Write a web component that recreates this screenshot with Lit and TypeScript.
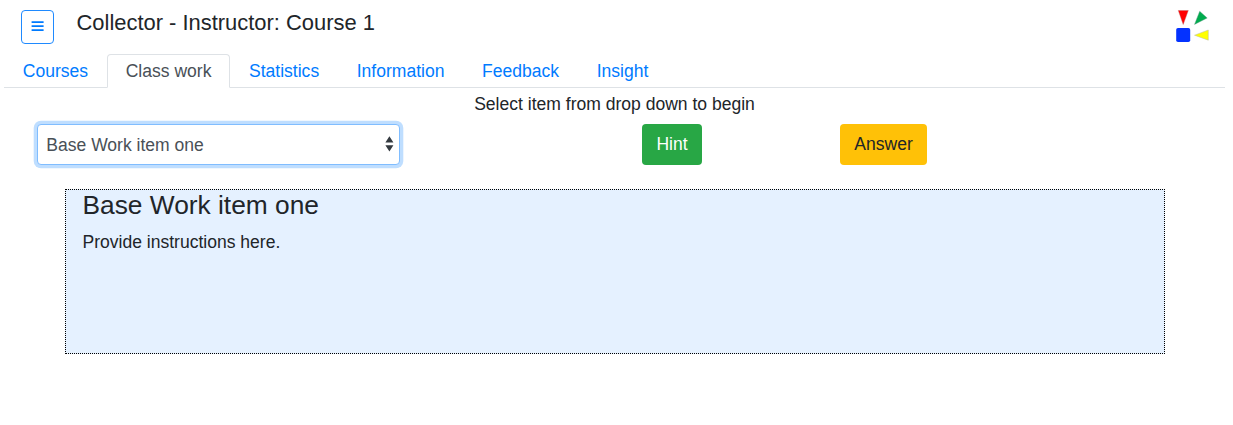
import { LitElement, html, css } from "lit";
import { customElement, state } from "lit/decorators.js";
import { classMap } from "lit/directives/class-map.js";

@customElement("app-root")
export class AppRoot extends LitElement {
  static styles = css`
    :host {
      display: block;
      height: 425px;
      box-sizing: border-box;
      padding: 0 8px 0 4px;
      overflow: hidden;
      background: #fff;
      color: #212529;
      font: 17.55px/26px "Liberation Sans", Arial, sans-serif;
    }
    * {
      box-sizing: border-box;
    }
    button {
      font: inherit;
      cursor: pointer;
      margin: 0;
    }
    header {
      display: flex;
      align-items: flex-start;
      height: 54px;
      padding: 10px 15px 0 17px;
    }
    .menu {
      display: flex;
      align-items: center;
      justify-content: center;
      width: 33px;
      height: 34px;
      padding: 0;
      border: 1px solid #1f8aff;
      border-radius: 4px;
      background: #fff;
      color: #007bff;
    }
    .menu svg,
    .logo {
      display: block;
    }
    h1 {
      flex: 1;
      margin: 0 0 0 22.5px;
      font-size: 21.93px;
      line-height: 26px;
      font-weight: 400;
    }
    nav {
      display: flex;
      height: 34px;
      border-bottom: 1px solid #dee2e6;
    }
    .tab {
      height: 34px;
      padding: 0 17.8px;
      border: 1px solid transparent;
      border-radius: 4px 4px 0 0;
      background: none;
      color: #007bff;
      line-height: 32px;
      white-space: nowrap;
    }
    .tab.active {
      color: #495057;
      background: #fff;
      border-color: #dee2e6 #dee2e6 #fff;
    }
    .prompt {
      margin: 3px 0 7px;
      text-align: center;
    }
    .controls {
      display: flex;
      height: 41px;
      padding-left: 33px;
    }
    .select {
      display: flex;
      align-items: center;
      justify-content: space-between;
      width: 363px;
      padding: 0 5.5px 0 8.3px;
      border: 1px solid #80bdff;
      border-radius: 4px;
      box-shadow: 0 0 0 3.3px #bfdeff;
      background: #fff;
      color: #495057;
    }
    .btn {
      padding: 0;
      border: 0;
      border-radius: 4px;
      line-height: 41px;
    }
    .hint {
      width: 60px;
      margin-left: 242px;
      background: #28a745;
      color: #fff;
    }
    .answer {
      width: 87px;
      margin-left: 138px;
      background: #ffc107;
      color: #212529;
    }
    .work {
      width: 1100px;
      height: 165px;
      margin: 24px 0 0 61px;
      padding: 0 16.5px;
      border: 1px dotted #000;
      background: #e5f1ff;
    }
    h2 {
      margin: 0 0 8px;
      font-size: 26.32px;
      line-height: 31px;
      font-weight: 400;
    }
    p {
      margin: 0;
    }
  `;

  private tabs = ["Courses", "Class work", "Statistics", "Information", "Feedback", "Insight"];

  @state() private active = "Class work";

  render() {
    return html`
      <header>
        <button class="menu" aria-label="Menu">
          <svg width="13" height="12" viewBox="0 0 13 12" fill="currentColor">
            <path d="M.6.2h12v1.7H.6zM.6 4.2h12v1.7H.6zM.6 8.2h12v1.7H.6z" />
          </svg>
        </button>
        <h1>Collector - Instructor: Course 1</h1>
        <svg class="logo" width="34" height="34" viewBox="0 0 34 34">
          <path d="M2.3.5h10L7.2 14.5z" fill="#f00" stroke="#b66" stroke-width=".4" />
          <path d="M23.7 1.3l7.5 6.7-12.7 6.4z" fill="#00ac4e" stroke="#698" stroke-width=".4" />
          <rect x="0.2" y="18" width="14" height="14" rx="1.8" fill="#0432ff" />
          <path d="M32.3 20v10.2l-13.8-5z" fill="#ff0" stroke="#bba" stroke-width=".5" />
        </svg>
      </header>
      <nav>
        ${this.tabs.map(
          (t) => html`<button
            class=${classMap({ tab: true, active: t === this.active })}
            @click=${() => (this.active = t)}
          >${t}</button>`
        )}
      </nav>
      <div class="prompt">Select item from drop down to begin</div>
      <div class="controls">
        <div class="select" role="combobox" tabindex="0">
          <span>Base Work item one</span>
          <svg width="9" height="17" viewBox="0 0 9 17" fill="#343a40">
            <path d="M.4 6.6h8L4.4.2zM.4 9.2h8l-4 6.3z" />
          </svg>
        </div>
        <button class="btn hint">Hint</button>
        <button class="btn answer">Answer</button>
      </div>
      <section class="work">
        <h2>Base Work item one</h2>
        <p>Provide instructions here.</p>
      </section>
    `;
  }
}
